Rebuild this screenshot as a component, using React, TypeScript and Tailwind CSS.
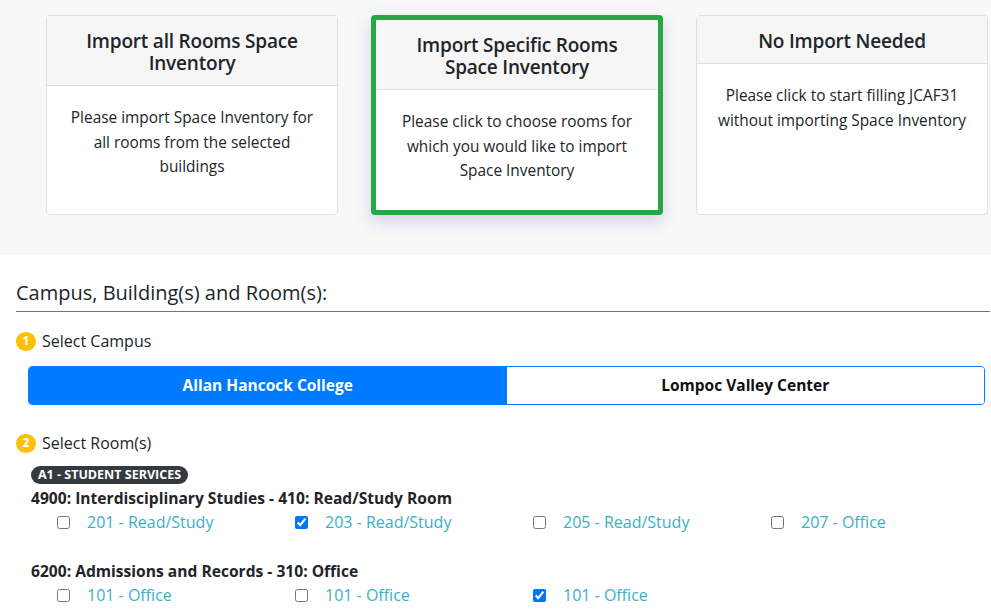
import { useState } from "react";

const font = { fontFamily: '"Open Sans", "Noto Sans", sans-serif' };

type Room = { label: string; checked: boolean };

const groups: { title: string; rooms: Room[] }[] = [
  {
    title: "4900: Interdisciplinary Studies - 410: Read/Study Room",
    rooms: [
      { label: "201 - Read/Study", checked: false },
      { label: "203 - Read/Study", checked: true },
      { label: "205 - Read/Study", checked: false },
      { label: "207 - Office", checked: false },
    ],
  },
  {
    title: "6200: Admissions and Records - 310: Office",
    rooms: [
      { label: "101 - Office", checked: false },
      { label: "101 - Office", checked: false },
      { label: "101 - Office", checked: true },
    ],
  },
];

function StepBadge({ n }: { n: number }) {
  return (
    <span className="flex h-[19px] w-[20px] items-center justify-center rounded-full bg-[#ffc107] text-[12px] font-bold text-white">
      {n}
    </span>
  );
}

export default function App() {
  const [campus, setCampus] = useState("ahc");

  return (
    <div className="min-h-screen bg-white text-[#212529]" style={font}>
      {/* import options */}
      <div className="flex h-[255px] gap-[33px] bg-[#f8f8f8] pl-[46px] pt-[15px]">
        <div className="flex h-[200px] w-[292px] shrink-0 flex-col rounded border border-[#dfdfdf] bg-white">
          <div className="border-b border-[#dfdfdf] bg-[#f6f6f7] px-4 pb-[11px] pt-[14px] text-center text-[19px] font-semibold leading-[22px] tracking-[-0.2px]">
            Import all Rooms Space Inventory
          </div>
          <div className="px-4 py-5 text-center text-[15.4px] leading-[24.5px]">
            Please import Space Inventory for all rooms from the selected buildings
          </div>
        </div>

        <div className="flex h-[200px] w-[292px] shrink-0 flex-col rounded border-[5px] border-[#28a745] bg-white shadow-[0_6px_16px_rgba(110,80,200,0.25)]">
          <div className="border-b border-[#dfdfdf] bg-[#f6f6f7] px-4 pb-[11px] pt-[14px] text-center text-[19px] font-semibold leading-[22px] tracking-[-0.2px]">
            Import Specific Rooms Space Inventory
          </div>
          <div className="px-4 py-5 text-center text-[15.4px] leading-[24.5px]">
            Please click to choose rooms for which you would like to import Space Inventory
          </div>
        </div>

        <div className="flex h-[200px] w-[292px] shrink-0 flex-col rounded border border-[#dfdfdf] bg-white">
          <div className="border-b border-[#dfdfdf] bg-[#f6f6f7] px-4 pb-[11px] pt-[14px] text-center text-[19px] font-semibold leading-[22px] tracking-[-0.2px]">
            No Import Needed
          </div>
          <div className="px-4 py-5 text-center text-[15.4px] leading-[24.5px]">
            Please click to start filling JCAF31 without importing Space Inventory
          </div>
        </div>
      </div>

      {/* campus / rooms */}
      <div className="pl-[16px] pr-px pt-[24px]">
        <h2 className="border-b border-[#6c757d] pb-[5px] text-[20px] leading-[27px]">
          Campus, Building(s) and Room(s):
        </h2>

        <div className="mt-[18px] flex items-center gap-[6px] text-[16px] leading-[22px]">
          <StepBadge n={1} />
          <span>Select Campus</span>
        </div>

        <div className="ml-[12px] mr-[5px] mt-[14px] flex h-[39px] overflow-hidden rounded border border-[#0d7bf2]">
          <button
            onClick={() => setCampus("ahc")}
            className={`flex-1 text-[15.5px] font-bold ${campus === "ahc" ? "bg-[#007bff] text-white" : "bg-white text-[#111]"}`}
          >
            Allan Hancock College
          </button>
          <button
            onClick={() => setCampus("lvc")}
            className={`flex-1 text-[15.5px] font-bold ${campus === "lvc" ? "bg-[#007bff] text-white" : "bg-white text-[#111]"}`}
          >
            Lompoc Valley Center
          </button>
        </div>

        <div className="mt-[27px] flex items-center gap-[6px] text-[16px] leading-[22px]">
          <StepBadge n={2} />
          <span>Select Room(s)</span>
        </div>

        <div className="ml-[15px] mt-[7px]">
          <span className="inline-block rounded-full bg-[#343a40] px-[7px] text-[12.5px] font-bold uppercase leading-[18px] text-white">
            A1 - Student Services
          </span>

          {groups.map((g, gi) => (
            <div key={gi} className={gi === 0 ? "mt-[2px]" : "mt-[26px]"}>
              <div className="text-[15.6px] font-bold leading-[22px]">{g.title}</div>
              <div className="mt-[1px] grid grid-cols-[238px_238px_238px_238px]">
                {g.rooms.map((r, ri) => (
                  <label key={ri} className="flex items-center pl-[26px] text-[16px] leading-[24px] text-[#3ab0c8]">
                    <input type="checkbox" defaultChecked={r.checked} className="h-[13px] w-[13px] accent-[#0075ff]" />
                    <span className="ml-[17px]">{r.label}</span>
                  </label>
                ))}
              </div>
            </div>
          ))}
        </div>
      </div>
    </div>
  );
}
